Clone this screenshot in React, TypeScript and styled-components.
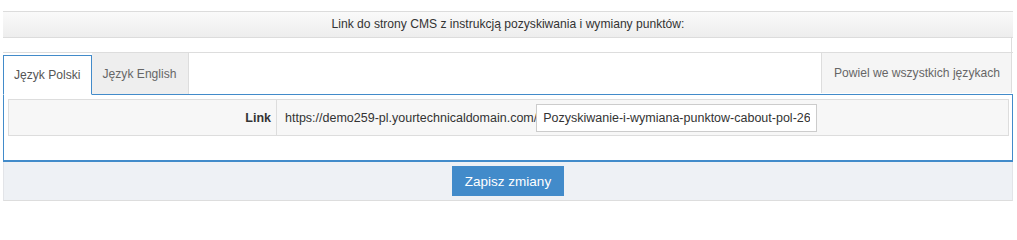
import React from "react";
import styled, { createGlobalStyle } from "styled-components";

const Global = createGlobalStyle`
  html, body { margin: 0; padding: 0; background: #fff; }
  body { font-family: "Liberation Sans", Arial, sans-serif; font-size: 12px; color: #333; }
`;

const Page = styled.div`
  padding: 11px 4px 0 3px;
`;

const Header = styled.div`
  height: 25px;
  line-height: 25px;
  border-top: 1px solid #dcdcdc;
  border-bottom: 1px solid #dcdcdc;
  background: linear-gradient(#fafafa, #ededed);
  text-align: center;
  font-size: 12.1px;
  color: #333;
`;

const Spacer = styled.div`
  height: 14px;
  margin-right: 1px;
  border-right: 1px solid #ddd;
`;

const TabBar = styled.div`
  display: flex;
  height: 41px;
  border-top: 1px solid #ddd;
  border-bottom: 1px solid #428bca;
`;

const Tab = styled.div<{ $active?: boolean; $right?: boolean }>`
  box-sizing: border-box;
  display: flex;
  align-items: center;
  font-size: 12.1px;
  color: #666;
  ${(p) =>
    p.$active
      ? `
    margin-top: 2px;
    height: 40px;
    margin-bottom: -1px;
    background: #fff;
    border: 1px solid #428bca;
    border-bottom-color: #fff;
    padding: 0 10px 0 10px;
    color: #555;
  `
      : p.$right
      ? `
    margin-left: auto;
    height: 40px;
    background: #f5f5f5;
    border-left: 1px solid #ddd;
    border-right: 1px solid #ddd;
    margin-right: 1px;
    padding: 0 11px 0 12px;
  `
      : `
    height: 41px;
    background: #eee;
    border-right: 1px solid #ddd;
    padding: 0 11px 0 11px;
  `}
`;

const Panel = styled.div`
  border-left: 1px solid #428bca;
  border-right: 1px solid #428bca;
  border-bottom: 2px solid #428bca;
  padding: 4px 3px 24px 4px;
`;

const Row = styled.div`
  display: flex;
  height: 35px;
  border: 1px solid #ddd;
  background: #f7f7f7;
`;

const LabelCell = styled.div`
  width: 268px;
  box-sizing: border-box;
  border-right: 1px solid #ddd;
  display: flex;
  align-items: center;
  justify-content: flex-end;
  padding-right: 5px;
  font-weight: bold;
  font-size: 12.5px;
  color: #333;
`;

const ValueCell = styled.div`
  flex: 1;
  display: flex;
  align-items: center;
  padding-left: 8px;
  overflow: hidden;
  white-space: nowrap;
`;

const Prefix = styled.span`
  color: #333;
  font-size: 12.5px;
`;

const Input = styled.input`
  box-sizing: border-box;
  width: 281px;
  height: 28px;
  margin-left: -1px;
  margin-top: 1px;
  border: 1px solid #ccc;
  background: #fff;
  font-family: "Liberation Sans", Arial, sans-serif;
  font-size: 12.5px;
  color: #333;
  padding: 0 6px;
  outline: none;
`;

const Footer = styled.div`
  display: flex;
  justify-content: center;
  height: 34px;
  box-sizing: content-box;
  padding-top: 4px;
  background: #eef1f5;
  border-bottom: 1px solid #ddd;
  border-left: 1px solid #e2e4e8;
  border-right: 1px solid #e2e4e8;
`;

const Button = styled.button`
  width: 112px;
  height: 30px;
  border: none;
  background: #428bca;
  color: #fff;
  font-family: "Liberation Sans", Arial, sans-serif;
  font-size: 13.5px;
  padding: 0;
  cursor: pointer;
`;

export default function App() {
  return (
    <>
      <Global />
      <Page>
        <Header>Link do strony CMS z instrukcją pozyskiwania i wymiany punktów:</Header>
        <Spacer />
        <TabBar>
          <Tab $active>Język Polski</Tab>
          <Tab>Język English</Tab>
          <Tab $right>Powiel we wszystkich językach</Tab>
        </TabBar>
        <Panel>
          <Row>
            <LabelCell>Link</LabelCell>
            <ValueCell>
              <Prefix>https://demo259-pl.yourtechnicaldomain.com/</Prefix>
              <Input defaultValue="Pozyskiwanie-i-wymiana-punktow-cabout-pol-26.html" />
            </ValueCell>
          </Row>
        </Panel>
        <Footer>
          <Button>Zapisz zmiany</Button>
        </Footer>
      </Page>
    </>
  );
}
